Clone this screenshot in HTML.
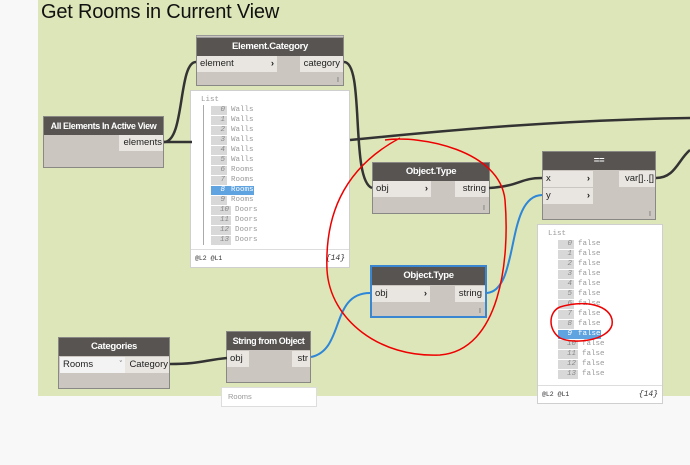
<!DOCTYPE html>
<html><head><meta charset="utf-8"><style>
*{margin:0;padding:0;box-sizing:border-box}
body{width:690px;height:465px;overflow:hidden;background:#f8f8f8;font-family:"Liberation Sans",sans-serif;position:relative}
.bg{position:absolute;left:38px;top:0;width:652px;height:396px;background:#dde6b9}
.title{position:absolute;left:41px;top:1px;font-size:20px;color:#111;letter-spacing:-0.2px}
.node{position:absolute;background:#cbc7c0;border:1px solid #8a8884}
.hd{background:#575452;color:#fff;font-weight:bold;font-size:9.5px;letter-spacing:-0.3px;white-space:nowrap;overflow:hidden;text-align:center;height:18px;line-height:18px}
.port{position:absolute;background:#e9e6e1;font-size:9.5px;color:#222;height:16px;line-height:16px;padding:0 3px;white-space:nowrap}
.arr{position:absolute;right:3px;top:0;font-weight:bold}
.one{position:absolute;right:4px;bottom:1px;font-size:7px;color:#666}
.list{position:absolute;background:#fff;border:1px solid #cfcfcf;font-family:"Liberation Mono",monospace;font-size:7.5px;color:#999}
.list .r{position:absolute;height:9px;line-height:9px;white-space:nowrap}
.list .n{display:inline-block;background:#d8d8d8;color:#888;width:16px;text-align:right;padding-right:2px;margin-right:4px;font-style:italic}
.list .sel{background:#5fa3e0;color:#fff}
.ft{position:absolute;left:0;right:0;bottom:0;height:18px;border-top:1px solid #ddd;font-size:6.5px;color:#333;line-height:17px;padding:0 4px}
svg{position:absolute;left:0;top:0}
</style></head><body>
<div class="bg"></div>
<div class="title">Get Rooms in Current View</div>

<svg width="690" height="465" style="z-index:1">
<g fill="none" stroke="#333" stroke-width="2.5">
<path d="M164 142 C185 142 178 62 196 62"/>
<path d="M164 142 L192 142"/>
<path d="M344 62 C365 62 350 180 372 188"/>
<path d="M350 140 C450 130 560 120 690 118"/>
<path d="M489 188 C520 186 520 178 542 178"/>
<path d="M656 178 C675 178 678 160 690 150"/>
<path d="M170 364 C200 364 205 360 227 358"/>
</g>
<g fill="none" stroke="#2d86d8" stroke-width="2">
<path d="M311 357 C345 350 330 293 370 293"/>
<path d="M487 293 C520 290 505 196 542 195"/>
</g>
</svg>

<div class="node" style="left:196px;top:35px;width:148px;height:51px;border-top:3px double #999">
<div class="hd">Element.Category</div>
<div class="port" style="left:0;top:18px;width:80px">element<span class="arr">&#8250;</span></div>
<div class="port" style="right:0;top:18px;width:43px;text-align:right">category</div>
<div class="one">I</div></div>

<div class="list" style="left:190px;top:90px;width:160px;height:178px">
<div style="position:absolute;left:10px;top:5px">List</div>
<div style="position:absolute;left:12px;top:14px;width:1px;height:140px;background:#aaa"></div>
<div class="r" style="left:20px;top:15px"><span class="n">0</span>Walls</div>
<div class="r" style="left:20px;top:25px"><span class="n">1</span>Walls</div>
<div class="r" style="left:20px;top:35px"><span class="n">2</span>Walls</div>
<div class="r" style="left:20px;top:45px"><span class="n">3</span>Walls</div>
<div class="r" style="left:20px;top:55px"><span class="n">4</span>Walls</div>
<div class="r" style="left:20px;top:65px"><span class="n">5</span>Walls</div>
<div class="r" style="left:20px;top:75px"><span class="n">6</span>Rooms</div>
<div class="r" style="left:20px;top:85px"><span class="n">7</span>Rooms</div>
<div class="r sel" style="left:20px;top:95px"><span class="n" style="background:#5fa3e0;color:#fff">8</span>Rooms</div>
<div class="r" style="left:20px;top:105px"><span class="n">9</span>Rooms</div>
<div class="r" style="left:20px;top:115px"><span class="n" style="width:20px">10</span>Doors</div>
<div class="r" style="left:20px;top:125px"><span class="n" style="width:20px">11</span>Doors</div>
<div class="r" style="left:20px;top:135px"><span class="n" style="width:20px">12</span>Doors</div>
<div class="r" style="left:20px;top:145px"><span class="n" style="width:20px">13</span>Doors</div>
<div class="ft">@L2 @L1<span style="float:right;font-style:italic;font-size:8px">{14}</span></div>
</div>

<div class="node" style="left:43px;top:116px;width:121px;height:52px">
<div class="hd" style="font-size:9px;letter-spacing:-0.4px">All Elements In Active View</div>
<div class="port" style="right:0;top:18px;width:44px;text-align:right;padding:0 1px">elements</div></div>

<div class="node" style="left:372px;top:162px;width:118px;height:52px">
<div class="hd">Object.Type</div>
<div class="port" style="left:0;top:18px;width:58px">obj<span class="arr">&#8250;</span></div>
<div class="port" style="right:0;top:18px;width:34px;text-align:right">string</div>
<div class="one">I</div></div>

<div class="node" style="left:542px;top:151px;width:114px;height:69px">
<div class="hd">==</div>
<div class="port" style="left:0;top:19px;width:50px">x<span class="arr">&#8250;</span></div>
<div class="port" style="left:0;top:36px;width:50px">y<span class="arr">&#8250;</span></div>
<div class="port" style="right:0;top:19px;width:36px;text-align:right;padding:0 1px">var[]..[]</div>
<div class="one">I</div></div>

<div class="list" style="left:537px;top:224px;width:126px;height:180px">
<div style="position:absolute;left:10px;top:5px">List</div>
<div class="r" style="left:20px;top:15px"><span class="n">0</span>false</div>
<div class="r" style="left:20px;top:25px"><span class="n">1</span>false</div>
<div class="r" style="left:20px;top:35px"><span class="n">2</span>false</div>
<div class="r" style="left:20px;top:45px"><span class="n">3</span>false</div>
<div class="r" style="left:20px;top:55px"><span class="n">4</span>false</div>
<div class="r" style="left:20px;top:65px"><span class="n">5</span>false</div>
<div class="r" style="left:20px;top:75px"><span class="n">6</span>false</div>
<div class="r" style="left:20px;top:85px"><span class="n">7</span>false</div>
<div class="r" style="left:20px;top:95px"><span class="n">8</span>false</div>
<div class="r sel" style="left:20px;top:105px"><span class="n" style="background:#5fa3e0;color:#fff">9</span>false</div>
<div class="r" style="left:20px;top:115px"><span class="n" style="width:20px">10</span>false</div>
<div class="r" style="left:20px;top:125px"><span class="n" style="width:20px">11</span>false</div>
<div class="r" style="left:20px;top:135px"><span class="n" style="width:20px">12</span>false</div>
<div class="r" style="left:20px;top:145px"><span class="n" style="width:20px">13</span>false</div>
<div class="ft">@L2 @L1<span style="float:right;font-style:italic;font-size:8px">{14}</span></div>
</div>

<div class="node" style="left:370px;top:265px;width:117px;height:53px;border:2px solid #3a86d0">
<div class="hd">Object.Type</div>
<div class="port" style="left:0;top:19px;width:58px">obj<span class="arr">&#8250;</span></div>
<div class="port" style="right:0;top:19px;width:30px;text-align:right">string</div>
<div class="one">I</div></div>

<div class="node" style="left:58px;top:337px;width:112px;height:52px">
<div class="hd">Categories</div>
<div class="port" style="left:1px;top:19px;width:65px;background:#f3f3f3">Rooms<span style="position:absolute;right:3px;font-size:7px">&#711;</span></div>
<div class="port" style="right:0;top:19px;width:44px;text-align:right;padding:0 1px">Category</div></div>

<div class="node" style="left:226px;top:331px;width:85px;height:52px">
<div class="hd" style="font-size:9px;letter-spacing:-0.4px">String from Object</div>
<div class="port" style="left:0;top:19px;width:22px">obj</div>
<div class="port" style="right:0;top:19px;width:18px;text-align:right;padding:0 2px">str</div></div>
<div style="position:absolute;left:221px;top:387px;width:96px;height:20px;background:#fff;border:1px solid #ddd;font-size:7.5px;color:#999;line-height:18px;padding-left:6px">Rooms</div>

<svg width="690" height="465" style="z-index:5">
<g fill="none" stroke="#e00" stroke-width="1.5">
<path d="M385 140 C420 135 500 150 505 200 C510 260 500 350 440 355 C380 358 330 320 327 270 C325 220 340 170 400 138"/>
<path d="M560 307 C590 298 615 308 612 325 C608 340 575 345 560 338 C548 330 548 312 560 307"/>
</g></svg>
</body></html>
